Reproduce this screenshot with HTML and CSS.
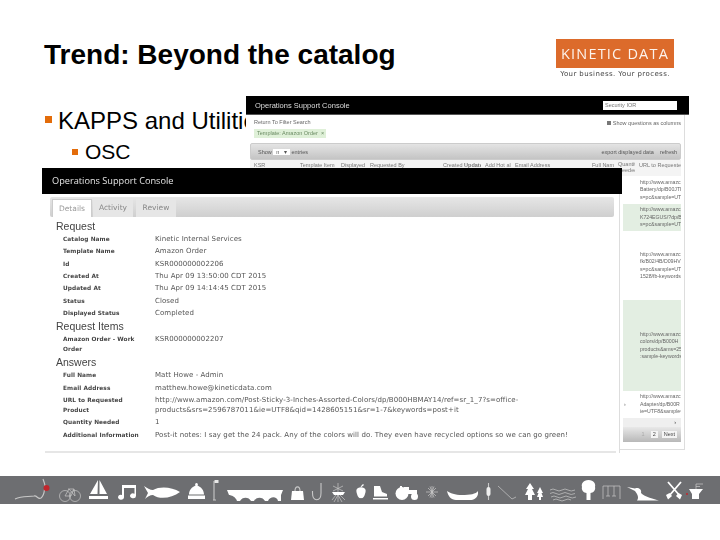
FILE: index.html
```html
<!DOCTYPE html>
<html lang="en">
    <head>
        <meta charset="UTF-8">
        <title>Trend: Beyond the catalog</title>
        <link rel="stylesheet" href="styles.css">
    </head>
    <body>
        <div class="slide">
            <div class="top">
                <h1 class="title">Trend: Beyond the catalog</h1>
                <div class="logo">
                    <div class="logoBox">KINETIC DATA</div>
                    <div class="logoTag">Your business. Your process.</div>
                </div>
            </div>

            <div class="main">
                <ul class="points">
                    <li>KAPPS and Utilities
                        <ul class="subpoints">
                            <li>OSC</li>
                        </ul>
                    </li>
                </ul>

                <!-- console window at the back, only its top and right edge show -->
                <div class="shot shotBack">
                    <div class="shotBar">
                        <span>Operations Support Console</span>
                        <span class="search">Security IOR</span>
                    </div>
                    <div class="backBody">
                        <div class="filterRow">
                            <div>
                                <div class="returnLink">Return To Filter Search</div>
                                <div class="chip">Template: Amazon Order &nbsp;×</div>
                            </div>
                            <div class="showCols"><span class="tick"></span>Show questions as columns</div>
                        </div>
                        <div class="toolbar">
                            <span>Show <span class="select">n &nbsp;&nbsp;▾</span> entries</span>
                            <span>export displayed data &nbsp;&nbsp; refresh</span>
                        </div>
                        <div class="tableHead">
                            <span>KSR</span>
                            <span>Template Item</span>
                            <span>Displayed</span>
                            <span>Requested By</span>
                            <span>Created <b>Updated</b></span>
                            <span>Add Hot all</span>
                            <span>Email Address</span>
                            <span>Full Name</span>
                            <span>Quantity Needed</span>
                            <span>URL to Requested</span>
                        </div>
                        <div class="urlRows">
                            <div class="urlRow h28"><div>http://www.amazc<br>Battery/dp/B00JTI<br>s=pc&amp;sample=UTF</div></div>
                            <div class="urlRow h27 green"><div>http://www.amazc<br>K724EGUS/?dp/B00<br>s=pc&amp;sample=UTF</div></div>
                            <div class="urlRow h69"><div>http://www.amazc<br>fk/B02/4B/D09HV3<br>s=pc&amp;sample=UTF<br>1528/fb-keywords</div></div>
                            <div class="urlRow h91 green"><div>http://www.amazc<br>colors/dp/B000H<br>products&amp;ams=25<br>:sample-keywords</div></div>
                            <div class="urlRow h27 marked"><span class="rowMark">›</span><div>http://www.amazc<br>Adapter/dp/B00R<br>ie=UTF8&amp;sample=R</div></div>
                        </div>
                        <div class="pager">
                            <div class="pagerTop">›</div>
                            <div class="pagerBtns"><span class="faint">1</span><span>2</span><span>Next</span></div>
                        </div>
                    </div>
                </div>

                <!-- console window in front with the submission details -->
                <div class="shot shotFront">
                    <div class="frontBar">Operations Support Console</div>
                    <div class="frontBody">
                        <div class="tabBar">
                            <span class="tab active">Details</span>
                            <span class="tab">Activity</span>
                            <span class="tab">Review</span>
                        </div>
                        <div class="details">
                            <div class="group">Request</div>
                            <dl class="fields">
                                <dt>Catalog Name</dt><dd>Kinetic Internal Services</dd>
                                <dt>Template Name</dt><dd>Amazon Order</dd>
                                <dt>Id</dt><dd>KSR000000002206</dd>
                                <dt>Created At</dt><dd>Thu Apr 09 13:50:00 CDT 2015</dd>
                                <dt>Updated At</dt><dd>Thu Apr 09 14:14:45 CDT 2015</dd>
                                <dt>Status</dt><dd>Closed</dd>
                                <dt>Displayed Status</dt><dd>Completed</dd>
                            </dl>
                            <div class="group">Request Items</div>
                            <dl class="fields">
                                <dt>Amazon Order - Work Order</dt><dd>KSR000000002207</dd>
                            </dl>
                            <div class="group">Answers</div>
                            <dl class="fields">
                                <dt>Full Name</dt><dd>Matt Howe - Admin</dd>
                                <dt>Email Address</dt><dd>matthew.howe@kineticdata.com</dd>
                                <dt>URL to Requested Product</dt><dd>http://www.amazon.com/Post-Sticky-3-Inches-Assorted-Colors/dp/B000HBMAY14/ref=sr_1_7?s=office-<br>products&amp;srs=2596787011&amp;ie=UTF8&amp;qid=1428605151&amp;sr=1-7&amp;keywords=post+it</dd>
                                <dt>Quantity Needed</dt><dd>1</dd>
                                <dt>Additional Information</dt><dd>Post-it notes: I say get the 24 pack. Any of the colors will do. They even have recycled options so we can go green!</dd>
                            </dl>
                        </div>
                        <div class="frontEnd"></div>
                    </div>
                </div>
            </div>

            <div class="band">
                <svg class="bandIcons" width="720" height="28" viewBox="0 0 720 28">
                    <!-- route and marker -->
                    <path d="M15 23 C22 20 28 21 34 20 C37 19 38 24 41 22 C45 19 44 14 45 10 C45 8 44 6 43 3" class="thin wide"/>
                    <circle cx="46.500" cy="12" r="3" fill="#c1272d"/>
                    <!-- bike -->
                    <g class="thin">
                        <circle cx="65" cy="20" r="5.500"/><circle cx="75" cy="20" r="5.500"/>
                        <path d="M65 20 L69 13 L75 20 M68 13 H74 L75 20 M65 20 H71 L74 13"/>
                    </g>
                    <!-- sailboat -->
                    <path d="M98 4 L97.500 18 L90 18 Z M99.500 4 L107 18 H99.500 Z M89 20 H108 V23 H89 Z" class="solid"/>
                    <!-- music notes -->
                    <path d="M122 9 H136 V20 A3 2.400 0 1 1 134.500 17.800 V12 H124 V21 A3 2.400 0 1 1 122 19 Z" class="solid"/>
                    <!-- fish -->
                    <path d="M144 10 C147 12 150 14 153 14 C160 10 172 11 180 16 C172 22 160 24 153 19 C150 19 147 21 145 23 L148 17 Z" class="solid"/>
                    <!-- knit hat -->
                    <path d="M196.500 7 a1.500 1.500 0 0 1 1 2.500 C201 11 204 14 204 18.500 H189 C189 14 192 11 195.500 9.500 a1.500 1.500 0 0 1 1 -2.500 Z M188 19.500 H205 V23 H188 Z" class="solid"/>
                    <!-- post -->
                    <path d="M214 5 V24 M213 24 H216" class="thin wide"/>
                    <rect x="214.500" y="4" width="4" height="3" fill="#e8e8e8"/>
                    <!-- bridge -->
                    <path d="M227 14 H283 L281 19 V25 H278 C277 20 270 20 268 25 H265 C263 20.500 256 20.500 254 25 H251 C249 20.500 242 20.500 240 25 H237 C236 21 231 19 229 19 Z" class="solid"/>
                    <!-- bag -->
                    <path d="M292 15 H303 L304 24 H291 Z" class="solid"/>
                    <path d="M295 15 C295 9.500 300 9.500 300 15" class="thin wide"/>
                    <!-- hook -->
                    <path d="M321 7 V17 C321 26 312.500 26 312.500 17 L312.500 15" class="thin wide"/>
                    <!-- dragonfly over roots -->
                    <path d="M338 7 V26 M333 10 L343 15 M343 10 L333 15 M334 26 L338 19 L342 26 M332 24 L336 19 M345 24 L340 19" class="thin"/>
                    <path d="M332 16 H345 L343 19 H334 Z" class="solid"/>
                    <!-- apple -->
                    <path d="M358 12 C360 11 362 11 364 12 C366 13 366 15 365 18 C364 22 362 22.500 361 22 C360 22.500 358 22 357 18 C356 15 356 13 358 12 Z M360.500 10.500 L363 8 L364 9 L361.500 11 Z" class="solid"/>
                    <!-- skate -->
                    <path d="M374 10 H380 L382 16 L387 18 V20.500 H374 Z M373 22 H388 V23.500 H373 Z" class="solid"/>
                    <!-- tractor -->
                    <circle cx="402" cy="17.500" r="6.500" fill="#fff"/>
                    <circle cx="414.500" cy="20.500" r="3.500" fill="#fff"/>
                    <path d="M404 13 V11 H409 V14 H417 V18 H404 Z M400 12 V10 H402 V12 Z" class="solid"/>
                    <!-- wheel -->
                    <path d="M432 10 V22 M426 16 H438 M428 12 L436 20 M436 12 L428 20 M430 10.500 L434 21.500 M434 10.500 L430 21.500" class="thin"/>
                    <!-- canoe -->
                    <path d="M447 15 C450 17 455 19 462 19 C470 19 476 18 478 15 V18 C477 22 474 24 470 24 H456 C451 24 448 20 447 15 Z" class="solid"/>
                    <!-- cattail -->
                    <path d="M488.500 7 V24" class="thin wide"/>
                    <rect x="486.500" y="11" width="4" height="9" rx="2" fill="#eee"/>
                    <!-- reed line -->
                    <path d="M498 10 L512 23 L516 21" class="thin"/>
                    <!-- pine trees -->
                    <path d="M530 7 L534 13 L532 13 L535 19 L532 19 V24 H528 V19 H525 L528 13 L526 13 Z M540 11 L543 17 L541.500 17 L543 21 H541 V24 H539 V21 H537 L538.500 17 L537 17 Z" class="solid"/>
                    <!-- waves -->
                    <path d="M550 14 q3 -2 6 0 t6 0 t6 0 t7 0 M550 17.500 q3 -2 6 0 t6 0 t6 0 t7 0 M551 21 q3 -2 6 0 t6 0 t6 0 t7 0 M553 24 q3 -2 6 0 t6 0 t6 0" class="thin"/>
                    <!-- round tree -->
                    <path d="M588.500 4 C594 4 596 8 595 11 C596 14 593 17 590.500 17 L590.500 24 H586.500 L586.500 17 C584 17 581 14 582 11 C581 8 583 4 588.500 4 Z" class="solid"/>
                    <!-- swing set -->
                    <path d="M603 23 V10 H620 V23 M608 10 V20 M614 10 V20 M606 20 H610 M612 20 H616" class="thin"/>
                    <!-- loon -->
                    <path d="M627 11 L635 12.500 C639 11 642 14 641 17 C645 21 654 23 659 24.500 H637 C639 22 638 19 635 15 Z" class="solid"/>
                    <!-- crossed paddles -->
                    <path d="M668 6 L680 20 M681 6 L669 20" class="thin wider"/>
                    <path d="M666 19 L669.500 17 L672 20 L668 23.500 Z M682 19 L678.500 17 L676 20 L680 23.500 Z" class="solid"/>
                    <!-- planter -->
                    <path d="M689 13 H703 L699 18 V23 H692 V18 Z" class="solid"/>
                    <path d="M696 13 V8 H703 M696 10.500 H700" class="thin"/>
                    <circle cx="687" cy="18" r="1" fill="#c1272d"/>
                </svg>
            </div>
        </div>
    </body>
</html>
```

FILE: styles.css
```css
* {
    margin: 0;
    padding: 0;
    box-sizing: border-box;
}
body {
    background: #fff;
    font-family: "Liberation Sans", Arial, sans-serif;
    overflow: hidden;
}
.slide {
    width: 720px;
    height: 540px;
    display: flex;
    flex-direction: column;
}

/* title and logo */
.top {
    height: 96px;
    display: flex;
    justify-content: space-between;
    align-items: flex-start;
    padding: 39px 46px 0 44px;
}
.title {
    font-size: 28px;
    line-height: 31px;
    color: #000;
}
.logo {
    width: 118px;
    filter: blur(.3px);
}
.logoBox {
    height: 29px;
    background: #dc6b2b;
    color: #fdf3ec;
    font-family: "Open Sans", sans-serif;
    font-size: 14.500px;
    line-height: 29px;
    letter-spacing: 1.200px;
    text-align: center;
    white-space: nowrap;
}
.logoTag {
    margin-top: 1px;
    font-family: "DejaVu Sans", sans-serif;
    font-size: 7px;
    line-height: 11px;
    letter-spacing: .4px;
    color: #444;
    text-align: center;
    white-space: nowrap;
}

/* bullets */
.main {
    flex: 1;
    position: relative;
}
.points {
    list-style: none;
    padding: 10px 0 0 58px;
    font-size: 24px;
    line-height: 30px;
    white-space: nowrap;
}
.points > li, .subpoints > li {
    position: relative;
}
.points > li::before {
    content: "";
    position: absolute;
    left: -13px;
    top: 10px;
    width: 7px;
    height: 7px;
    background: #e36c0a;
}
.subpoints {
    list-style: none;
    margin-top: 4px;
    padding-left: 27px;
    font-size: 21px;
    line-height: 24px;
}
.subpoints > li::before {
    content: "";
    position: absolute;
    left: -13px;
    top: 9px;
    width: 6px;
    height: 6px;
    background: #e36c0a;
}

/* the two screenshots lie over the bullets */
.shot {
    position: absolute;
    overflow: hidden;
    filter: blur(.35px);
}
.shotBack {
    left: 246px;
    top: 0;
    width: 443px;
    height: 355px;
    color: #666;
    font-size: 5.500px;
}
.shotBar {
    height: 19px;
    background: #000;
    color: #ddd;
    font-size: 7.500px;
    display: flex;
    justify-content: space-between;
    align-items: center;
    padding: 0 12px 0 9px;
    border-bottom: 1px solid #555;
}
.search {
    width: 74px;
    height: 9px;
    background: #fff;
    color: #777;
    font-size: 5.500px;
    line-height: 9px;
    padding-left: 2px;
}
.backBody {
    height: 335px;
    margin-right: 4px;
    background: #fff;
    border-right: 1px solid #ddd;
    border-bottom: 1px solid #ddd;
}
.filterRow {
    height: 28px;
    display: flex;
    justify-content: space-between;
    padding: 4px 3px 0 8px;
}
.returnLink {
    line-height: 7px;
}
.chip {
    margin-top: 3px;
    width: 72px;
    height: 9px;
    background: #dff0d8;
    color: #6a8a62;
    line-height: 9px;
    padding-left: 3px;
    white-space: nowrap;
}
.showCols {
    display: flex;
    align-items: center;
    gap: 2px;
    height: 7px;
}
.tick {
    width: 4px;
    height: 4px;
    background: #777;
}
.toolbar {
    height: 17px;
    margin: 0 3px 0 4px;
    background: linear-gradient(#e4e4e4, #c4c4c4);
    border: 1px solid #ccc;
    border-radius: 2px;
    display: flex;
    justify-content: space-between;
    align-items: center;
    padding: 0 3px 0 7px;
    color: #555;
}
.select {
    display: inline-block;
    background: #fff;
    padding: 0 3px;
}
.tableHead {
    height: 16px;
    margin: 0 3px 0 4px;
    padding-top: 2px;
    background: #f4f4f4;
    display: grid;
    grid-template-columns: 46px 41px 29px 73px 42px 30px 77px 26px 21px 1fr;
    align-items: start;
    line-height: 6px;
    color: #777;
    white-space: nowrap;
}
.tableHead span {
    padding-left: 4px;
    overflow: hidden;
}
.tableHead span:nth-child(9) {
    white-space: normal;
    margin-top: -1px;
}
.urlRows {
    margin: 0 3px 0 377px;
    display: flex;
    flex-direction: column;
    font-size: 5.200px;
}
.urlRow {
    display: flex;
    align-items: center;
    padding-left: 17px;
    line-height: 7.500px;
    white-space: nowrap;
    overflow: hidden;
    color: #666;
}
.green {
    background: #e3eee2;
}
.h28 { height: 28px; }
.h27 { height: 27px; }
.h69 { height: 69px; }
.h91 { height: 91px; }
.marked {
    padding-left: 1px;
}
.rowMark {
    flex: none;
    width: 16px;
}
.pager {
    margin: 0 3px 0 377px;
}
.pagerTop {
    height: 9px;
    background: #efefef;
    text-align: right;
    padding-right: 5px;
    line-height: 8px;
    color: #333;
}
.pagerBtns {
    height: 15px;
    background: linear-gradient(#e8e8e8, #b8b8b8);
    display: flex;
    justify-content: flex-end;
    align-items: center;
    gap: 4px;
    padding-right: 4px;
}
.pagerBtns span {
    background: #f4f4f4;
    padding: 0 2px;
    line-height: 7px;
    color: #444;
}
.pagerBtns .faint {
    background: none;
    color: #aaa;
}

/* front window */
.shotFront {
    left: 42px;
    top: 72px;
    width: 580px;
    height: 285px;
    color: #555;
    font-family: "DejaVu Sans", sans-serif;
}
.frontBar {
    height: 26px;
    background: #000;
    color: #e4e4e4;
    font-size: 9.200px;
    line-height: 26px;
    padding-left: 10px;
    font-family: "Open Sans", sans-serif;
}
.frontBody {
    height: 259px;
    margin-right: 2px;
    padding-top: 3px;
    background: #fff;
    border-right: 1px solid #ddd;
}
.tabBar {
    height: 20px;
    margin: 0 5px 0 8px;
    background: linear-gradient(#e6e6e6, #cfcfcf);
    display: flex;
    gap: 1px;
    padding: 2px 0 0 2px;
    border-radius: 2px;
}
.tab {
    width: 40px;
    height: 18px;
    background: #e6e6e6;
    color: #888;
    font-size: 7.500px;
    line-height: 17px;
    text-align: center;
}
.tab:nth-child(3) {
    margin-left: 2px;
}
.tab.active {
    background: #fff;
    color: #999;
    border: 1px solid #ccc;
    border-bottom: 0;
}
.details {
    height: 234px;
    padding: 3px 0 0 14px;
    font-size: 7px;
    letter-spacing: .08px;
}
.group {
    height: 12px;
    font-family: "Liberation Sans", sans-serif;
    font-size: 10.500px;
    line-height: 12px;
    letter-spacing: 0;
    color: #444;
}
.fields {
    display: grid;
    grid-template-columns: 92px 1fr;
    padding: 1px 0 1px 7px;
}
.fields dt {
    font-weight: bold;
    font-size: 5.800px;
    color: #444;
    line-height: 10px;
    padding: 1.150px 8px 1.150px 0;
}
.fields dd {
    white-space: nowrap;
    line-height: 10px;
    padding: 1.150px 0;
}
.frontEnd {
    height: 2px;
    background: #e6e6e6;
    margin: 0 3px;
}

/* icon band at the bottom */
.band {
    height: 28px;
    margin-bottom: 36px;
    background: #6d6e71;
}
.bandIcons {
    display: block;
    filter: blur(.3px);
}
.solid {
    fill: #fff;
}
.thin {
    fill: none;
    stroke: #c8c8c8;
    stroke-width: .7;
}
.wide {
    stroke-width: 1.100;
}
.wider {
    stroke: #fff;
    stroke-width: 1.800;
}
```
